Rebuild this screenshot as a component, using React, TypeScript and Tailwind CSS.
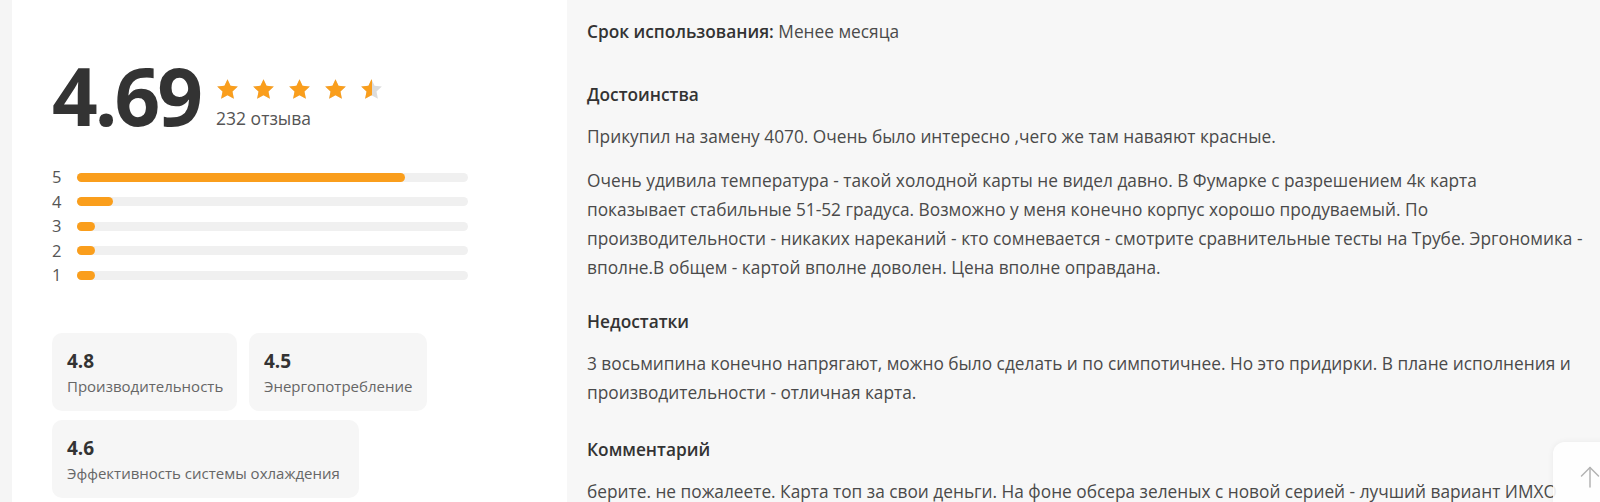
import React from "react";

const ORANGE = "#fa9e1c";

function Star({ fill = 1 }: { fill?: number }) {
  const pts = "12,1.2 15.2,8.1 22.8,9 17.2,14.2 18.7,21.8 12,18 5.3,21.8 6.8,14.2 1.2,9 8.8,8.1";
  return (
    <div className="relative w-[23px] h-[22px]">
      <svg viewBox="0 0 24 23" className="absolute inset-0 w-[23px] h-[22px]">
        <polygon points={pts} fill="#dcdcdc" />
      </svg>
      <div className="absolute left-0 top-0 h-[22px] overflow-hidden" style={{ width: `${fill * 23}px` }}>
        <svg viewBox="0 0 24 23" className="w-[23px] h-[22px]">
          <polygon points={pts} fill={ORANGE} />
        </svg>
      </div>
    </div>
  );
}

const bars = [
  { n: 5, w: 328 },
  { n: 4, w: 36 },
  { n: 3, w: 18 },
  { n: 2, w: 18 },
  { n: 1, w: 18 },
];

function Card({ value, label, w }: { value: string; label: string; w: string }) {
  return (
    <div className={`${w} h-[78px] rounded-[10px] bg-[#f6f6f6] pl-[15px] pt-[15px]`}>
      <div className="text-[19px] leading-[26px] font-bold text-[#333]">{value}</div>
      <div className="text-[15px] leading-[20px] text-[#666] whitespace-nowrap mt-[2px]">{label}</div>
    </div>
  );
}

function Line({ children }: { children: React.ReactNode }) {
  return <div className="whitespace-nowrap">{children}</div>;
}

export default function App() {
  return (
    <div className="relative w-full h-[502px] overflow-hidden bg-[#f7f7f7] flex font-['Open_Sans',sans-serif]">
      <div className="w-[12px] shrink-0 bg-[#f5f5f5]" />
      <div className="w-[555px] shrink-0 bg-white pl-[40px] pt-[55px]">
        <div className="flex items-start">
          <div className="text-[80px] leading-[80px] font-bold tracking-[-3px] text-[#333]">4.69</div>
          <div className="ml-[16px] mt-[23px]">
            <div className="flex gap-[13px]">
              <Star />
              <Star />
              <Star />
              <Star />
              <Star fill={0.5} />
            </div>
            <div className="mt-[7px] text-[17.5px] leading-[22px] text-[#555]">232 отзыва</div>
          </div>
        </div>

        <div className="mt-[30px] flex flex-col">
          {bars.map((b) => (
            <div key={b.n} className="h-[24.5px] flex items-center">
              <div className="w-[25px] text-[16.5px] leading-[20px] text-[#555]">{b.n}</div>
              <div className="w-[391px] h-[9px] rounded-full bg-[#f0f0f0]">
                <div className="h-[9px] rounded-full" style={{ width: `${b.w}px`, backgroundColor: ORANGE }} />
              </div>
            </div>
          ))}
        </div>

        <div className="mt-[45px] flex flex-col gap-[9px]">
          <div className="flex gap-[12px]">
            <Card value="4.8" label="Производительность" w="w-[185px]" />
            <Card value="4.5" label="Энергопотребление" w="w-[178px]" />
          </div>
          <Card value="4.6" label="Эффективность системы охлаждения" w="w-[307px]" />
        </div>
      </div>

      <div className="flex-1 pl-[20px] pt-[17px] text-[17.3px] leading-[29px] text-[#4a4a4a]">
        <div>
          <span className="font-semibold text-[#333]">Срок использования:</span> Менее месяца
        </div>

        <div className="mt-[34px] font-semibold text-[#333]">Достоинства</div>
        <div className="mt-[13px]">
          <Line>Прикупил на замену 4070. Очень было интересно ,чего же там наваяют красные.</Line>
        </div>
        <div className="mt-[15px]">
          <Line>Очень удивила температура - такой холодной карты не видел давно. В Фумарке с разрешением 4к карта</Line>
          <Line>показывает стабильные 51-52 градуса. Возможно у меня конечно корпус хорошо продуваемый. По</Line>
          <Line>производительности - никаких нареканий - кто сомневается - смотрите сравнительные тесты на Трубе. Эргономика -</Line>
          <Line>вполне.В общем - картой вполне доволен. Цена вполне оправдана.</Line>
        </div>

        <div className="mt-[25px] font-semibold text-[#333]">Недостатки</div>
        <div className="mt-[13px]">
          <Line>3 восьмипина конечно напрягают, можно было сделать и по симпотичнее. Но это придирки. В плане исполнения и</Line>
          <Line>производительности - отличная карта.</Line>
        </div>

        <div className="mt-[28px] font-semibold text-[#333]">Комментарий</div>
        <div className="mt-[13px]">
          <Line>берите. не пожалеете. Карта топ за свои деньги. На фоне обсера зеленых с новой серией - лучший вариант ИМХО</Line>
        </div>
      </div>

      <div className="absolute left-[1553px] top-[442px] w-[74px] h-[70px] rounded-[12px] bg-white/90 shadow-[0_0_6px_rgba(0,0,0,0.06)] flex items-center justify-center">
        <svg width="20" height="22" viewBox="0 0 20 22" fill="none" stroke="#b3b3b3" strokeWidth="1.5" strokeLinecap="round" strokeLinejoin="round">
          <path d="M10 1.5V21" />
          <path d="M1.5 10L10 1.5L18.5 10" />
        </svg>
      </div>
    </div>
  );
}
